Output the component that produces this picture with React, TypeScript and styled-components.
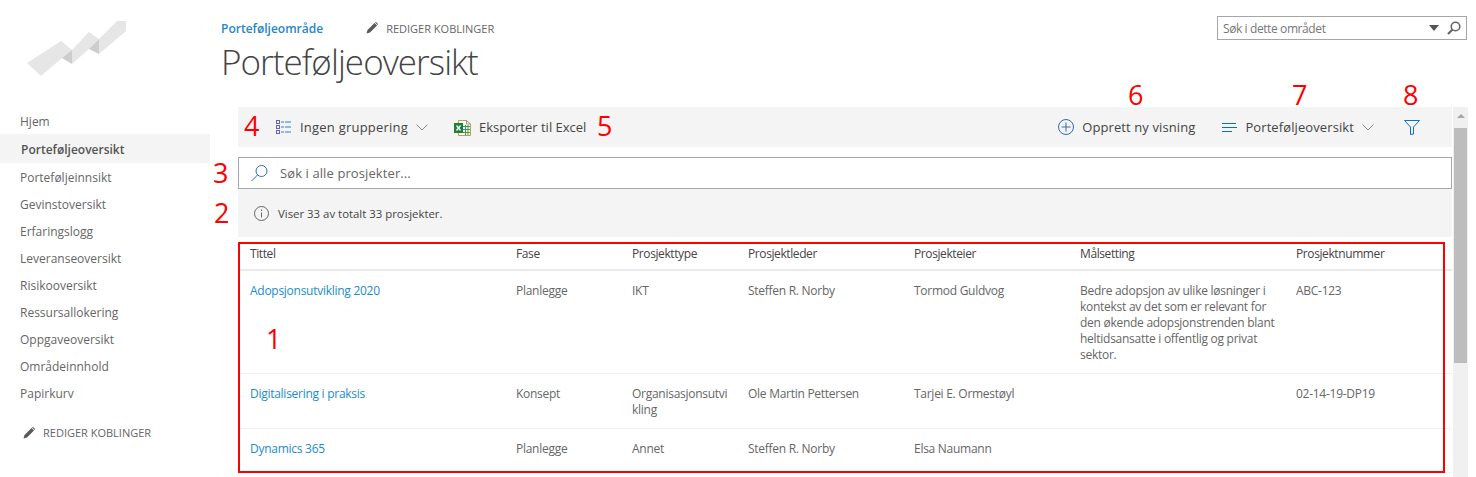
import React, { FC } from 'react';
import styled, { createGlobalStyle } from 'styled-components';

const navItems = [
    'Hjem', 'Porteføljeoversikt', 'Porteføljeinnsikt', 'Gevinstoversikt', 'Erfaringslogg', 'Leveranseoversikt',
    'Risikooversikt', 'Ressursallokering', 'Oppgaveoversikt', 'Områdeinnhold', 'Papirkurv',
];

const columns = ['Tittel', 'Fase', 'Prosjekttype', 'Prosjektleder', 'Prosjekteier', 'Målsetting', 'Prosjektnummer'];

const rows = [
    {
        title: 'Adopsjonsutvikling 2020', phase: 'Planlegge', type: 'IKT', lead: 'Steffen R. Norby', owner: 'Tormod Guldvog',
        goal: 'Bedre adopsjon av ulike løsninger i kontekst av det som er relevant for den økende adopsjonstrenden blant heltidsansatte i offentlig og privat sektor.',
        number: 'ABC-123',
    },
    {
        title: 'Digitalisering i praksis', phase: 'Konsept', type: 'Organisasjonsutvikling', lead: 'Ole Martin Pettersen', owner: 'Tarjei E. Ormestøyl',
        goal: '', number: '02-14-19-DP19',
    },
    { title: 'Dynamics 365', phase: 'Planlegge', type: 'Annet', lead: 'Steffen R. Norby', owner: 'Elsa Naumann', goal: '', number: '' },
];

const marks = [
    { n: 1, x: 266, y: 339 }, { n: 2, x: 214, y: 213 }, { n: 3, x: 213, y: 173 }, { n: 4, x: 244, y: 126 },
    { n: 5, x: 597, y: 126 }, { n: 6, x: 1128, y: 95 }, { n: 7, x: 1292, y: 95 }, { n: 8, x: 1403, y: 95 },
];

const Pencil: FC = () => (
    <svg width="12" height="12" viewBox="0 0 12 12">
        <path d="M0.5 11.5 L1.5 8 L8.5 1 L11 3.5 L4 10.5 Z" fill="#5a5a5a" />
        <path d="M9 0.5 L10 0 L12 2 L11.5 3 Z" fill="#5a5a5a" />
    </svg>
);

const Chevron: FC = () => (
    <svg width="12" height="7" viewBox="0 0 12 7" fill="none" stroke="#8a8a8a" strokeWidth="1">
        <path d="M0.5 0.5 L6 6 L11.5 0.5" />
    </svg>
);

const App: FC = () => (
    <Page>
        <GlobalStyle />
        <Sidebar>
            <Logo width="126" height="80" viewBox="0 0 126 80">
                <path d="M27 63 L61 41 L72 50 L62 58 L41 76 Z" fill="#e6e6e6" />
                <path d="M72 50 L89 32 L99 39 L89 49 L72 64 Z" fill="#e6e6e6" />
                <path d="M99 39 L117 21 L126 21 L126 31 L99 54 Z" fill="#e6e6e6" />
                <path d="M62 58 L72 50 L72 64 Z" fill="#cdcdcd" />
                <path d="M89 49 L99 39 L99 54 Z" fill="#cdcdcd" />
            </Logo>
            <Nav>
                {navItems.map((item) => (
                    <NavItem key={item} $selected={item === 'Porteføljeoversikt'}>{item}</NavItem>
                ))}
            </Nav>
            <SideEdit>
                <Pencil />
                <EditLabel>REDIGER KOBLINGER</EditLabel>
            </SideEdit>
        </Sidebar>
        <Main>
            <Header>
                <TopRow>
                    <Crumb>Porteføljeområde</Crumb>
                    <TopEdit>
                        <Pencil />
                        <EditLabel>REDIGER KOBLINGER</EditLabel>
                    </TopEdit>
                    <SiteSearch>
                        <SiteSearchText>Søk i dette området</SiteSearchText>
                        <svg width="10" height="6" viewBox="0 0 10 6"><path d="M0 0 H10 L5 6 Z" fill="#555" /></svg>
                        <svg width="14" height="14" viewBox="0 0 14 14" fill="none" stroke="#666" strokeWidth="1.6">
                            <circle cx="8.5" cy="5.5" r="4.3" />
                            <path d="M5.5 8.5 L1 13" strokeWidth="2.2" />
                        </svg>
                    </SiteSearch>
                </TopRow>
                <Title>Porteføljeoversikt</Title>
            </Header>
            <Content>
                <Panel>
                    <Toolbar>
                        <ToolButton $left={38}>
                            <svg width="16" height="15" viewBox="0 0 16 15" fill="none" strokeWidth="1">
                                <g stroke="#6a5fc1">
                                    <rect x="0.5" y="0.5" width="3" height="3" />
                                    <rect x="0.5" y="5.5" width="3" height="3" />
                                    <rect x="0.5" y="10.5" width="3" height="3" />
                                </g>
                                <path d="M5 2 H8 M9 2 H15 M5 7 H8 M9 7 H15 M5 12 H8 M9 12 H15" stroke="#2b7cd3" />
                            </svg>
                            <ToolText $spacing={0.22}>Ingen gruppering</ToolText>
                            <Chevron />
                        </ToolButton>
                        <ToolButton $left={26}>
                            <svg width="17" height="17" viewBox="0 0 17 17">
                                <path d="M4.5 1.5 H12.5 L16.5 5 V16.5 H4.5 Z" fill="#fff" stroke="#b9a24a" />
                                <path d="M12.5 1.5 V5 H16.5" fill="none" stroke="#7a9a8a" />
                                <path d="M9 7.5 H16 M9 10.5 H16 M9 13.5 H16 M11.5 6 V16 M14 6 V16" stroke="#3f9b4f" strokeWidth="1" />
                                <rect x="0" y="4" width="9" height="10" fill="#1a7f37" />
                                <path d="M2.5 6.5 L6.5 11.5 M6.5 6.5 L2.5 11.5" stroke="#fff" strokeWidth="1.3" />
                            </svg>
                            <ToolText $spacing={0}>Eksporter til Excel</ToolText>
                        </ToolButton>
                        <Spacer />
                        <ToolButton $left={0}>
                            <svg width="16" height="16" viewBox="0 0 16 16" fill="none" stroke="#2b6cb8" strokeWidth="1">
                                <circle cx="8" cy="8" r="7.5" />
                                <path d="M8 3.5 V12.5 M3.5 8 H12.5" stroke="#3a6ea5" />
                            </svg>
                            <ToolText $spacing={0.1}>Opprett ny visning</ToolText>
                        </ToolButton>
                        <ToolButton $left={27}>
                            <svg width="15" height="11" viewBox="0 0 15 11" fill="none" stroke="#0b6fc9" strokeWidth="1">
                                <path d="M0 1.5 H14 M0 5.5 H15 M0 9.5 H10" />
                            </svg>
                            <ToolText $spacing={0.1}>Porteføljeoversikt</ToolText>
                            <Chevron />
                        </ToolButton>
                        <ToolButton $left={30} $right={32}>
                            <svg width="16" height="15" viewBox="0 0 16 15" fill="none" stroke="#0b6fc9" strokeWidth="1">
                                <path d="M0.5 0.5 H15.5 L9.5 7 V14 L6.5 14.5 V7 Z" />
                            </svg>
                        </ToolButton>
                    </Toolbar>
                    <SearchBox>
                        <svg width="17" height="17" viewBox="0 0 17 17" fill="none" stroke="#2b6cb8" strokeWidth="1">
                            <circle cx="10.5" cy="6" r="5.5" />
                            <path d="M6.5 10 L0.5 16" />
                        </svg>
                        <SearchText>Søk i alle prosjekter...</SearchText>
                    </SearchBox>
                    <InfoBar>
                        <svg width="15" height="15" viewBox="0 0 15 15" fill="none" stroke="#666" strokeWidth="1">
                            <circle cx="7.5" cy="7.5" r="7" />
                            <path d="M7.5 6.5 V11.5 M7.5 3.5 V5" />
                        </svg>
                        <InfoText>Viser 33 av totalt 33 prosjekter.</InfoText>
                    </InfoBar>
                    <HeadRow>
                        {columns.map((column) => <HeadCell key={column}>{column}</HeadCell>)}
                    </HeadRow>
                    {rows.map((row) => (
                        <Row key={row.title}>
                            <Cell><TitleLink>{row.title}</TitleLink></Cell>
                            <Cell>{row.phase}</Cell>
                            <Cell>{row.type}</Cell>
                            <Cell>{row.lead}</Cell>
                            <Cell>{row.owner}</Cell>
                            <Cell>{row.goal}</Cell>
                            <Cell>{row.number}</Cell>
                        </Row>
                    ))}
                </Panel>
                <Scrollbar>
                    <ScrollArrow />
                    <ScrollThumb />
                </Scrollbar>
            </Content>
        </Main>
        <RedBox />
        {marks.map((mark) => <Mark key={mark.n} $x={mark.x} $y={mark.y}>{mark.n}</Mark>)}
    </Page>
);

const GlobalStyle = createGlobalStyle`
    html, body {
        margin: 0;
        height: 100%;
        overflow: hidden;
        background: #fff;
    }
    body {
        font-family: "Open Sans", "Liberation Sans", sans-serif;
    }
`;

const Page = styled.div`
    position: relative;
    display: flex;
    width: 1476px;
    height: 477px;
    overflow: hidden;
`;

const Sidebar = styled.div`
    width: 210px;
    flex: none;
`;

const Logo = styled.svg`
    display: block;
    margin-bottom: 27px;
`;

const Nav = styled.div`
    display: flex;
    flex-direction: column;
`;

const NavItem = styled.div<{ $selected: boolean }>`
    display: flex;
    align-items: center;
    height: ${(p) => (p.$selected ? 29 : 27)}px;
    padding-top: 1px;
    box-sizing: border-box;
    padding-left: ${(p) => (p.$selected ? 21 : 20)}px;
    background: ${(p) => (p.$selected ? '#f4f4f4' : 'transparent')};
    color: ${(p) => (p.$selected ? '#555' : '#666')};
    font-size: 12px;
    font-weight: ${(p) => (p.$selected ? 600 : 400)};
`;

const SideEdit = styled.div`
    display: flex;
    align-items: center;
    margin: 19px 0 0 23px;
`;

const EditLabel = styled.span`
    margin-left: 8px;
    color: #666;
    font-size: 11px;
`;

const Main = styled.div`
    flex: 1;
    min-width: 0;
`;

const Header = styled.div`
    height: 107px;
    padding-left: 11px;
    box-sizing: border-box;
`;

const TopRow = styled.div`
    display: flex;
    align-items: center;
    height: 24px;
    padding-top: 16px;
    padding-right: 9px;
`;

const Crumb = styled.div`
    color: #2488c8;
    font-size: 12px;
    font-weight: 600;
`;

const TopEdit = styled.div`
    display: flex;
    align-items: center;
    margin-left: 43px;
`;

const SiteSearch = styled.div`
    display: flex;
    align-items: center;
    gap: 8px;
    width: 250px;
    height: 24px;
    margin-left: auto;
    padding: 0 5px;
    box-sizing: border-box;
    border: 1px solid #a6a6a6;
`;

const SiteSearchText = styled.div`
    flex: 1;
    color: #777;
    font-size: 12px;
    letter-spacing: -0.4px;
`;

const Title = styled.div`
    color: #444;
    font-size: 35px;
    font-weight: 300;
    line-height: 44px;
    letter-spacing: -0.95px;
`;

const Content = styled.div`
    display: flex;
    margin-left: 28px;
    padding-right: 8px;
    gap: 1px;
`;

const Panel = styled.div`
    width: 1214px;
    flex: none;
`;

const Toolbar = styled.div`
    display: flex;
    align-items: center;
    height: 40px;
    background: #f4f4f4;
`;

const Spacer = styled.div`
    flex: 1;
`;

const ToolButton = styled.div<{ $left: number; $right?: number }>`
    display: flex;
    align-items: center;
    gap: 8px;
    margin-left: ${(p) => p.$left}px;
    margin-right: ${(p) => p.$right ?? 0}px;
`;

const ToolText = styled.span<{ $spacing: number }>`
    color: #444;
    font-size: 13px;
    letter-spacing: ${(p) => p.$spacing}px;
`;

const SearchBox = styled.div`
    display: flex;
    align-items: center;
    height: 32px;
    margin-top: 10px;
    padding-left: 12px;
    box-sizing: border-box;
    border: 1px solid #a6a6a6;
`;

const SearchText = styled.span`
    margin-left: 12px;
    color: #666;
    font-size: 13px;
    letter-spacing: 0.1px;
`;

const InfoBar = styled.div`
    display: flex;
    align-items: center;
    height: 48px;
    padding-left: 16px;
    background: #f4f4f4;
`;

const InfoText = styled.span`
    margin-left: 9px;
    color: #444;
    font-size: 11.4px;
`;

const tableGrid = `
    display: grid;
    grid-template-columns: 266px 116px 116px 166px 166px 216px 1fr;
    padding-left: 12px;
    box-sizing: border-box;
`;

const HeadRow = styled.div`
    ${tableGrid}
    align-items: center;
    height: 34px;
    padding-top: 1px;
    border-bottom: 2px solid #eaeaea;
`;

const HeadCell = styled.div`
    color: #444;
    font-size: 12px;
    letter-spacing: -0.4px;
`;

const Row = styled.div`
    ${tableGrid}
    min-height: 44px;
    padding-top: 12px;
    padding-bottom: 10px;
    border-bottom: 1px solid #f0f0f0;
`;

const Cell = styled.div`
    padding-right: 16px;
    color: #666;
    font-size: 12px;
    line-height: 16px;
    letter-spacing: -0.27px;
    overflow-wrap: anywhere;
`;

const TitleLink = styled.a`
    color: #1a8ccb;
`;

const Scrollbar = styled.div`
    position: relative;
    width: 15px;
    height: 370px;
    background: #f0f0f0;
`;

const ScrollArrow = styled.div`
    width: 0;
    height: 0;
    margin: 0 auto;
    transform: translateY(7px);
    border-left: 4px solid transparent;
    border-right: 4px solid transparent;
    border-bottom: 4px solid #a6a6a6;
`;

const ScrollThumb = styled.div`
    width: 13px;
    height: 235px;
    margin: 17px 0 0 1px;
    background: #bdbdbd;
`;

const RedBox = styled.div`
    position: absolute;
    left: 238px;
    top: 242px;
    width: 1207px;
    height: 231px;
    box-sizing: border-box;
    border: 2px solid #f00;
    pointer-events: none;
`;

const Mark = styled.div<{ $x: number; $y: number }>`
    position: absolute;
    left: ${(p) => p.$x}px;
    top: ${(p) => p.$y - 20}px;
    color: #f00;
    font-size: 27px;
    font-weight: 500;
    line-height: 40px;
`;

export default App;
